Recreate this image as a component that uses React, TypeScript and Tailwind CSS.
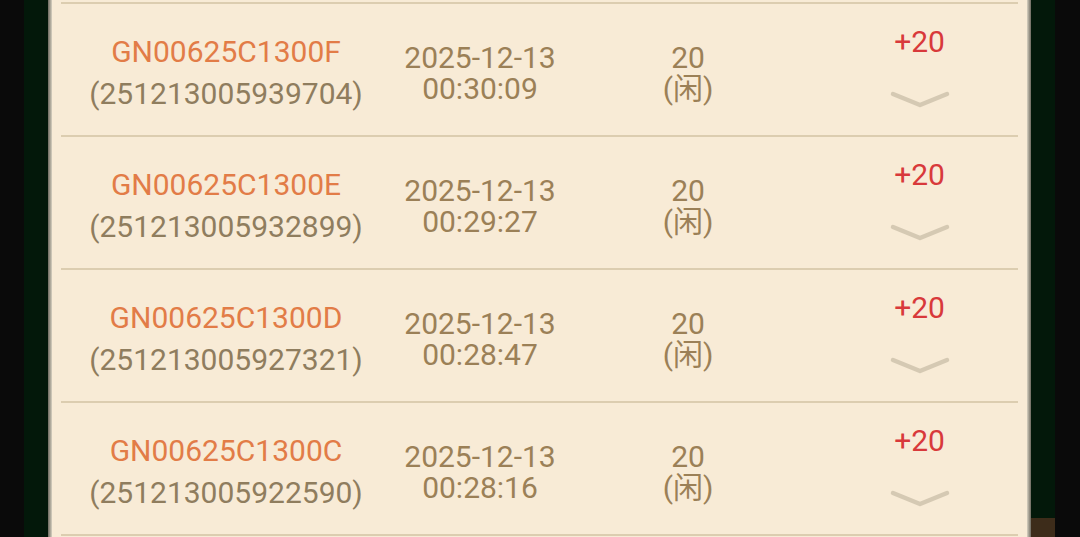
import React from "react";

const rows = [
  { code: "GN00625C1300F", id: "251213005939704", date: "2025-12-13", time: "00:30:09" },
  { code: "GN00625C1300E", id: "251213005932899", date: "2025-12-13", time: "00:29:27" },
  { code: "GN00625C1300D", id: "251213005927321", date: "2025-12-13", time: "00:28:47" },
  { code: "GN00625C1300C", id: "251213005922590", date: "2025-12-13", time: "00:28:16" },
];

const Chevron = () => (
  <svg width="60" height="20" viewBox="0 0 60 20" fill="none">
    <path
      d="M3 4 L30 15 L57 4"
      stroke="#d5c9b3"
      strokeWidth="4.5"
      strokeLinecap="round"
      strokeLinejoin="round"
    />
  </svg>
);

const App = () => {
  return (
    <div
      className="flex h-[537px] w-[1080px] overflow-hidden bg-[#0b0b0b]"
      style={{ fontFamily: "Roboto, 'Noto Sans CJK SC', sans-serif" }}
    >
      <div className="w-[24px] bg-[#0a0a0a]" />
      <div className="w-[24px] bg-[#03180a]" />
      <div className="w-[4px] bg-gradient-to-r from-[#6d6a60] to-[#d9d2c2]" />
      {/* panel */}
      <div className="flex w-[975px] flex-col bg-[#f8ebd6] pt-[2px]">
        <div className="mx-[9px] h-[2px] bg-[#dccdb0]" />
        {rows.map((r) => (
          <div
            key={r.code}
            className="mx-[9px] grid h-[133px] shrink-0 grid-cols-[330px_178px_238px_1fr] border-b-2 border-[#dccdb0] text-[30px]"
          >
            <div className="flex flex-col items-center justify-center pt-[7px] leading-[42px]">
              <span className="text-[#e27c47]">{r.code}</span>
              <span className="text-[#8f7d5e]">({r.id})</span>
            </div>
            <div className="flex flex-col items-center justify-center pt-[6px] leading-[31px] text-[#9b8057]">
              <span>{r.date}</span>
              <span>{r.time}</span>
            </div>
            <div className="flex flex-col items-center justify-center pt-[6px] leading-[31px] text-[#9b8057]">
              <span>20</span>
              <span>(闲)</span>
            </div>
            <div className="flex flex-col items-center justify-center gap-[33px] pl-[14px] pb-[4px]">
              <span className="leading-[31px] text-[#d8393b]">+20</span>
              <Chevron />
            </div>
          </div>
        ))}
      </div>
      <div className="w-[4px] bg-gradient-to-r from-[#d9d2c2] to-[#6d6a60]" />
      <div className="flex w-[24px] flex-col bg-[#03180a]">
        <div className="flex-1" />
        <div className="h-[19px] bg-[#3d2c1a]" />
      </div>
      <div className="flex-1 bg-[#0a0a0a]" />
    </div>
  );
};

export default App;
